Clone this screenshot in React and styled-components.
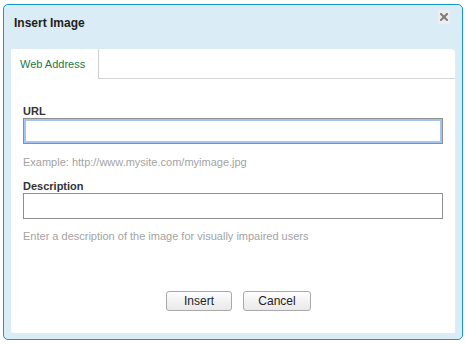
import styled, { createGlobalStyle } from 'styled-components';

const GlobalStyle = createGlobalStyle`
  html, body {
    margin: 0;
    padding: 0;
    background: #fff;
  }
  body {
    font-family: "Liberation Sans", Arial, sans-serif;
  }
`;

const Dialog = styled.div`
  box-sizing: border-box;
  width: 460px;
  height: 336px;
  margin: 4px 0 0 3px;
  border: 1px solid #1897c9;
  border-radius: 5px;
  background: #daecf5;
  display: flex;
  flex-direction: column;
`;

const TitleBar = styled.div`
  height: 44px;
  display: flex;
  align-items: flex-start;
  justify-content: space-between;
  padding: 0 12px 0 10px;
`;

const Title = styled.h1`
  margin: 11px 0 0;
  font-size: 12px;
  line-height: 14px;
  font-weight: bold;
  color: #1e1e1e;
`;

const CloseButton = styled.button`
  margin-top: 5px;
  width: 12px;
  height: 14px;
  padding: 0;
  border: none;
  border-radius: 1px;
  background: #eeeeee;
  display: flex;
  align-items: center;
  justify-content: center;
  cursor: pointer;
`;

const Panel = styled.div`
  flex: 1;
  margin: 0 7px 6px 7px;
  background: #fff;
  border-radius: 0 4px 2px 2px;
  display: flex;
  flex-direction: column;
`;

const TabStrip = styled.div`
  height: 30px;
  display: flex;
`;

const Tab = styled.div`
  box-sizing: border-box;
  width: 88px;
  height: 30px;
  padding-left: 9px;
  border-right: 1px solid #cfcfcf;
  display: flex;
  align-items: center;
  font-size: 11px;
  color: #217a4a;
`;

const TabFill = styled.div`
  flex: 1;
  border-bottom: 1px solid #d4d4d4;
`;

const Body = styled.div`
  flex: 1;
  padding: 25px 12px 0 12px;
  display: flex;
  flex-direction: column;
`;

const Label = styled.label`
  display: block;
  margin-top: ${p => p.$gap || 0}px;
  font-size: 11px;
  line-height: 14px;
  font-weight: bold;
  color: #333;
`;

const Input = styled.input`
  box-sizing: border-box;
  width: 100%;
  height: 26px;
  margin: 0;
  padding: 2px 5px;
  border: 1px solid #8e8e8e;
  background: #fff;
  font-family: "Liberation Sans", Arial, sans-serif;
  font-size: 12px;
  outline: none;
  box-shadow: ${p => (p.$focused ? 'inset 0 0 0 2px #a5c3f3' : 'none')};
`;

const Hint = styled.div`
  margin-top: ${p => p.$gap || 0}px;
  font-size: 11px;
  line-height: 14px;
  color: #a3a3a3;
`;

const Buttons = styled.div`
  margin-top: 48px;
  padding-left: 11px;
  display: flex;
  justify-content: center;
  gap: 11px;
`;

const Button = styled.button`
  box-sizing: border-box;
  width: ${p => p.$width}px;
  height: 20px;
  padding: 0;
  border: 1px solid #a9a9a9;
  border-radius: 3px;
  background: linear-gradient(#fdfdfd, #e9e9e9);
  font-family: "Liberation Sans", Arial, sans-serif;
  font-size: 12px;
  color: #222;
  cursor: pointer;
`;

const CloseIcon = () => (
  <svg width="8" height="8" viewBox="0 0 8 8">
    <path d="M1 1 L7 7 M7 1 L1 7" stroke="#7b7b7b" strokeWidth="2" strokeLinecap="square" />
  </svg>
);

export default function App() {
  return (
    <>
      <GlobalStyle />
      <Dialog>
        <TitleBar>
          <Title>Insert Image</Title>
          <CloseButton aria-label="Close">
            <CloseIcon />
          </CloseButton>
        </TitleBar>
        <Panel>
          <TabStrip>
            <Tab>Web Address</Tab>
            <TabFill />
          </TabStrip>
          <Body>
            <Label>URL</Label>
            <Input $focused />
            <Hint $gap={11}>Example: http://www.mysite.com/myimage.jpg</Hint>
            <Label $gap={10}>Description</Label>
            <Input />
            <Hint $gap={10}>Enter a description of the image for visually impaired users</Hint>
            <Buttons>
              <Button $width={66}>Insert</Button>
              <Button $width={68}>Cancel</Button>
            </Buttons>
          </Body>
        </Panel>
      </Dialog>
    </>
  );
}
